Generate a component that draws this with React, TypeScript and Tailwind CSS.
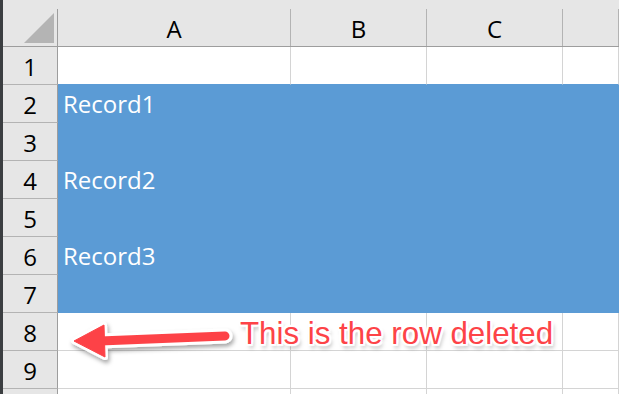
const cols = ["A", "B", "C", ""];
const colW = ["w-[233px]", "w-[136px]", "w-[136px]", "flex-1"];

const rows = [
  { n: "1", text: "", blue: false, nextBlue: true },
  { n: "2", text: "Record1", blue: true },
  { n: "3", text: "", blue: true },
  { n: "4", text: "Record2", blue: true },
  { n: "5", text: "", blue: true },
  { n: "6", text: "Record3", blue: true },
  { n: "7", text: "", blue: true },
  { n: "8", text: "", blue: false },
  { n: "9", text: "", blue: false },
  { n: "", text: "", blue: false },
];

const cellFont = "font-['Open_Sans',sans-serif] text-[24px] leading-[24px]";

export default function App() {
  return (
    <div className="relative w-[619px] h-[394px] overflow-hidden flex bg-white">
      <div className="w-[3px] bg-[#3b3e41]" />
      <div className="flex-1 flex flex-col">
        {/* column headers */}
        <div className="flex h-[47px] shrink-0 bg-[#e6e6e6] border-b border-[#9d9d9d]">
          <div className="w-[55px]">
            <div className="mt-[9px] h-[37px] border-r border-[#9d9d9d] flex items-end justify-end pr-[3px] pb-[3px]">
              <svg width="30" height="30" viewBox="0 0 30 30">
                <polygon points="30,0 30,30 0,30" fill="#b4b4b4" />
              </svg>
            </div>
          </div>
          {cols.map((c, i) => (
            <div key={i} className={colW[i]}>
              <div
                className={`mt-[9px] h-[37px] border-r border-[#b3b3b3] flex items-end justify-center pb-[5px] text-black ${cellFont}`}
              >
                {c}
              </div>
            </div>
          ))}
        </div>

        {/* rows */}
        {rows.map((r, idx) => (
          <div key={idx} className="flex h-[38px] shrink-0">
            <div
              className={`w-[55px] bg-[#e6e6e6] border-r border-b border-r-[#9d9d9d] border-b-[#b3b3b3] flex items-end justify-center pb-[5px] text-black ${cellFont}`}
            >
              {r.n}
            </div>
            {colW.map((w, i) => (
              <div
                key={i}
                className={`${w} border-b border-r flex items-end pl-[5px] pb-[6px] whitespace-nowrap ${cellFont} ${
                  r.blue
                    ? "bg-[#5b9bd5] border-[#5b9bd5] text-white"
                    : r.nextBlue
                    ? "bg-white border-r-[#d4d4d4] border-b-[#5b9bd5]"
                    : "bg-white border-[#d4d4d4]"
                }`}
              >
                {i === 0 ? r.text : ""}
              </div>
            ))}
          </div>
        ))}
      </div>

      {/* annotation arrow */}
      <svg
        className="absolute left-0 top-0 pointer-events-none"
        width="619"
        height="394"
        viewBox="0 0 619 394"
      >
        <defs>
          <filter id="sh" x="-20%" y="-50%" width="140%" height="200%">
            <feDropShadow dx="1.5" dy="3" stdDeviation="2" floodColor="#000" floodOpacity="0.35" />
          </filter>
        </defs>
        <g filter="url(#sh)">
          <line x1="100" y1="341" x2="225" y2="336" stroke="#fff" strokeWidth="15" strokeLinecap="round" />
          <polygon points="74,341 104,325 105,357" fill="#fff" stroke="#fff" strokeWidth="6" strokeLinejoin="round" />
          <line x1="100" y1="341" x2="225" y2="336" stroke="#fd4347" strokeWidth="9" strokeLinecap="round" />
          <polygon points="74,341 104,325 105,357" fill="#fd4347" stroke="#fd4347" strokeWidth="1" strokeLinejoin="round" />
        </g>
      </svg>

      {/* annotation text */}
      <div
        className="absolute left-[240px] top-[318px] whitespace-nowrap font-['Liberation_Sans',Arial,sans-serif] text-[31.3px] leading-[31px] text-[#fd4347] [text-shadow:0_0_2px_#fff,2px_0_1px_#fff,-2px_0_1px_#fff,0_2px_1px_#fff,0_-2px_1px_#fff,2px_2px_1px_#fff,-2px_-2px_1px_#fff,2px_-2px_1px_#fff,-2px_2px_1px_#fff,2px_4px_4px_rgba(0,0,0,0.35)]"
      >
        This is the row deleted
      </div>
    </div>
  );
}
